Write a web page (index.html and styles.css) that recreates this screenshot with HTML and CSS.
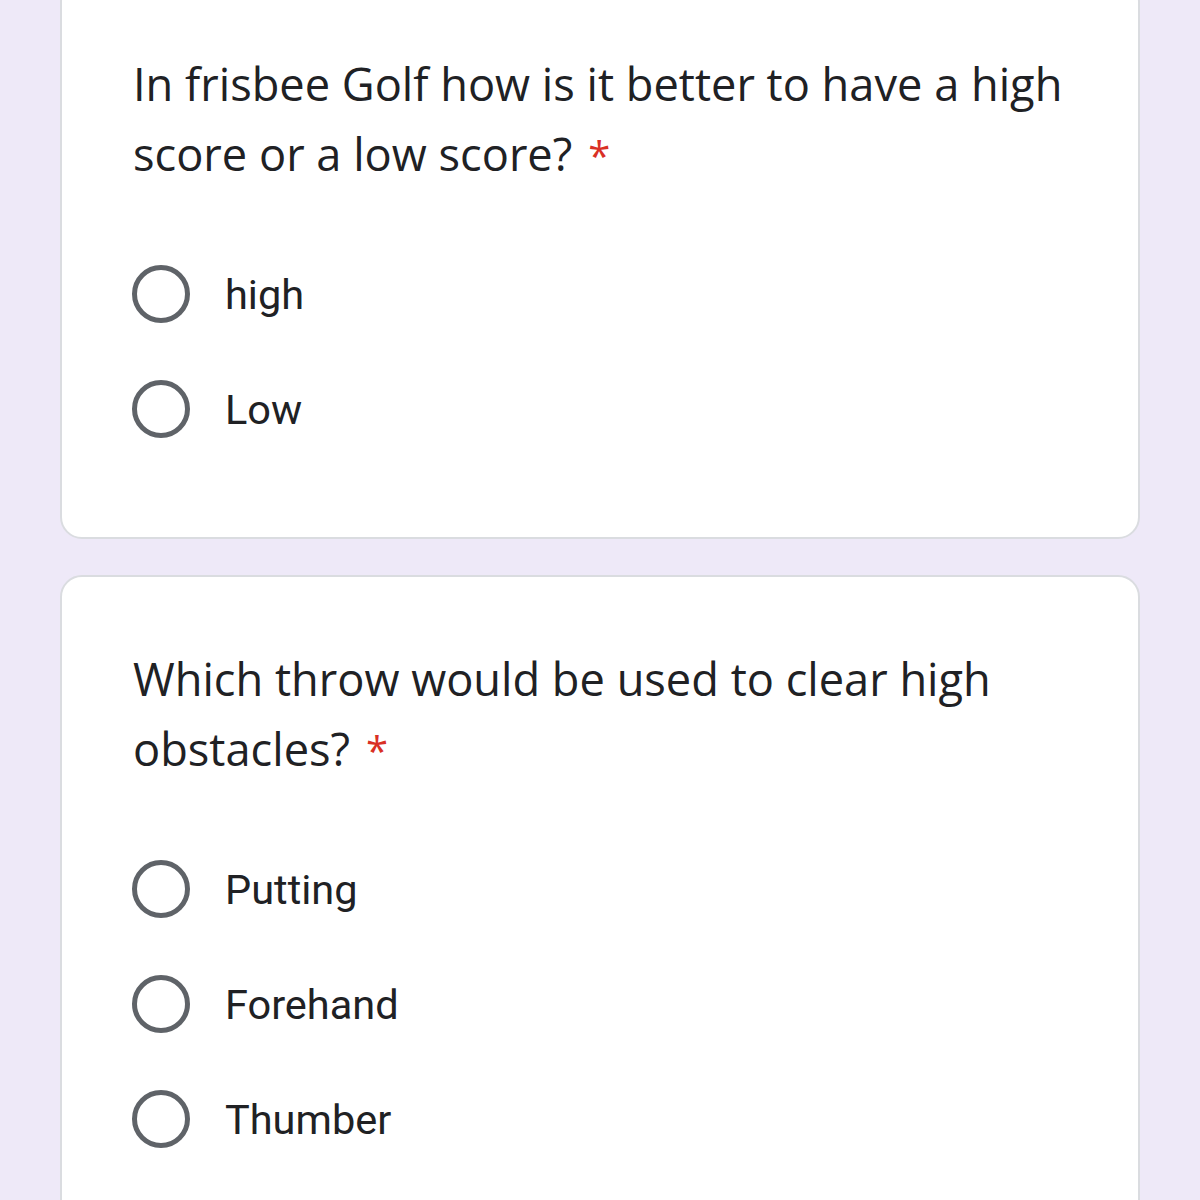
FILE: index.html
```html
<!DOCTYPE html>
<html>
<head>
<meta charset="utf-8">
<link rel="stylesheet" href="styles.css">
</head>
<body>
<div class="page">
  <div class="card first">
    <div class="title">In frisbee Golf how is it better to have a high score or a low score?<span class="req">*</span></div>
    <div class="options">
      <div class="option"><span class="radio"></span><span class="label">high</span></div>
      <div class="option"><span class="radio"></span><span class="label">Low</span></div>
    </div>
  </div>
  <div class="card">
    <div class="title">Which throw would be used to clear high obstacles?<span class="req">*</span></div>
    <div class="options">
      <div class="option"><span class="radio"></span><span class="label">Putting</span></div>
      <div class="option"><span class="radio"></span><span class="label">Forehand</span></div>
      <div class="option"><span class="radio"></span><span class="label">Thumber</span></div>
    </div>
  </div>
</div>
</body>
</html>
```
FILE: styles.css
```css
html, body {
  margin: 0;
  padding: 0;
  background: #eee9f8;
  height: 1200px;
  overflow: hidden;
}
.page {
  display: flex;
  flex-direction: column;
  gap: 36px;
  padding: 0 60px;
  margin-top: -20px;
}
.card {
  background: #fff;
  border: 2px solid #dadce0;
  border-radius: 22px;
  padding: 67px 66px 99px 71px;
}
.title {
  font-family: "Open Sans", sans-serif;
  font-size: 45.2px;
  line-height: 70px;
  color: #202124;
}
.req {
  color: #d93025;
  margin-left: 16px;
  font-size: 40px;
}
.options {
  margin-top: 74px;
  display: flex;
  flex-direction: column;
  gap: 57px;
}
.option {
  display: flex;
  align-items: center;
  height: 58px;
}
.radio {
  box-sizing: border-box;
  width: 58px;
  height: 58px;
  border: 5px solid #5f6368;
  border-radius: 50%;
  margin-left: -1px;
  flex: none;
}
.label {
  margin-left: 35px;
  font-family: Roboto, sans-serif;
  font-size: 41.5px;
  color: #202124;
}
```
